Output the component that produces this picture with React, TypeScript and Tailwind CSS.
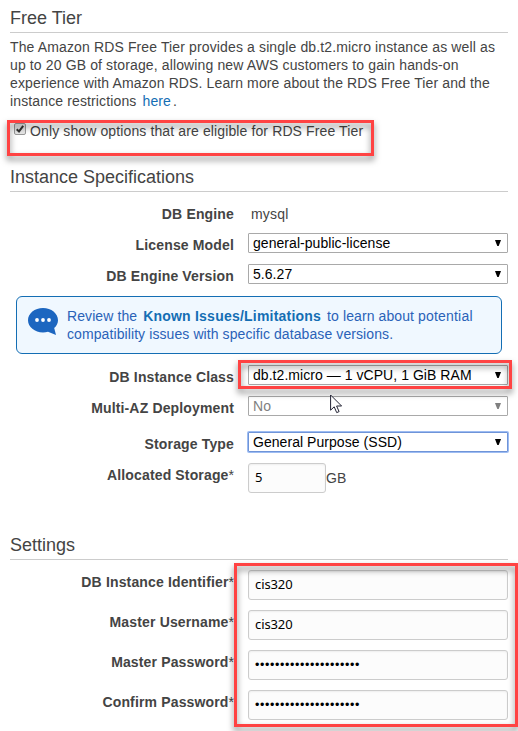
import type { ReactNode } from "react";

const sans = "font-['Liberation_Sans',Arial,sans-serif]";

function Heading({ children }: { children: ReactNode }) {
  return (
    <h2 className="h-[26px] border-b border-[#ccc] text-[18px] leading-[22px] text-[#444]">
      {children}
    </h2>
  );
}

function Row({ label, star, className, children }: { label: string; star?: boolean; className: string; children: ReactNode }) {
  return (
    <div className={`flex ${className}`}>
      <div className="w-[224px] shrink-0 pt-[3px] text-right text-[14px] leading-[18px] font-bold tracking-[0.15px] whitespace-nowrap text-[#444]">
        {label}
        {star && <span className="font-normal tracking-normal">*</span>}
      </div>
      <div className="ml-[14px] flex">{children}</div>
    </div>
  );
}

function Select({ value, className = "border-[#a9a9a9] text-black" }: { value: string; className?: string }) {
  return (
    <div className={`flex h-5 w-[260px] items-center justify-between rounded-[1px] border bg-white pr-[6px] pl-1 text-[14px] leading-[18px] tracking-[0.05px] ${className}`}>
      <span className="whitespace-nowrap">{value}</span>
      <svg width="6" height="6" viewBox="0 0 6 6" fill="currentColor">
        <path d="M0 0h6L3.700 6H2.300z" />
      </svg>
    </div>
  );
}

function Field({ value, width = "w-[260px]", password }: { value: string; width?: string; password?: boolean }) {
  return (
    <div className={`flex h-[30px] items-center rounded-[3px] border border-[#ccc] bg-[#fcfcfc] pl-[6px] text-black shadow-[inset_0_1px_2px_rgba(0,0,0,0.06)] ${width}`}>
      {password ? (
        <span className="text-[12.5px] leading-[18px] tracking-[0.62px]">{value}</span>
      ) : (
        <span className="pb-[2px] font-['Noto_Sans',sans-serif] text-[13px] leading-[18px] tracking-[-0.1px]">{value}</span>
      )}
    </div>
  );
}

function Highlight({ className }: { className: string }) {
  return <div className={`pointer-events-none absolute border-3 border-[#ff4343] drop-shadow-[0_4px_3px_rgba(0,0,0,0.5)] ${className}`} />;
}

export default function App() {
  return (
    <div className={`relative h-[731px] w-[518px] overflow-hidden bg-white pt-[7px] pl-[10px] text-[#444] ${sans}`}>
      <section className="w-[498px]">
        <Heading>Free Tier</Heading>
        <p className="mt-[5px] text-[14px] leading-[18px] tracking-[0.13px] whitespace-nowrap">
          The Amazon RDS Free Tier provides a single db.t2.micro instance as well as
          <br />
          up to 20 GB of storage, allowing new AWS customers to gain hands-on
          <br />
          experience with Amazon RDS. Learn more about the RDS Free Tier and the
          <br />
          instance restrictions <span className="mr-[2px] ml-[2px] text-[#146eb4]">here</span>.
        </p>
        <div className="mt-[11px] flex h-[22px] pl-1">
          <svg className="mt-[2px]" width="12" height="12" viewBox="0 0 12 12">
            <rect x=".5" y=".5" width="11" height="11" rx="1.5" fill="#e5e5e5" stroke="#999" />
            <path d="M2.700 6.200 5 8.400 9.200 2.800" fill="none" stroke="#333" strokeWidth="2" />
          </svg>
          <span className="ml-1 text-[14px] leading-[20px] tracking-[0.12px] whitespace-nowrap">
            Only show options that are eligible for RDS Free Tier
          </span>
        </div>
      </section>

      <section className="mt-[23px] w-[498px]">
        <Heading>Instance Specifications</Heading>
        <Row label="DB Engine" className="mt-[10px] h-[31px]">
          <span className="pt-[3px] pl-[3px] text-[14px] leading-[18px] tracking-[0.2px]">mysql</span>
        </Row>
        <Row label="License Model" className="h-[31px]">
          <Select value="general-public-license" />
        </Row>
        <Row label="DB Engine Version" className="h-8">
          <Select value="5.6.27" />
        </Row>
        <div className="ml-[6px] flex h-[58px] w-[486px] rounded-[6px] border border-[#146eb4] bg-[#f0f8ff]">
          <svg className="mt-[10px] ml-[11px] shrink-0" width="31" height="29" viewBox="0 0 31 29">
            <path fill="#1c66c0" d="M15 1C23.300 1 30 6.600 30 13.200c0 3-1.500 5.800-3.800 7.900l1.800 6.800-8-3.200c-1.600.5-3.300.7-5 .7C6.700 25.400 0 19.900 0 13.200S6.700 1 15 1z" />
            <g fill="#fff">
              <circle cx="9" cy="13" r="1.900" />
              <circle cx="15" cy="13" r="1.900" />
              <circle cx="21" cy="13" r="1.900" />
            </g>
          </svg>
          <p className="mt-[10px] ml-2 text-[14px] leading-[18px] tracking-[0.09px] whitespace-nowrap text-[#2a62b8]">
            Review the <b className="mx-[2px] tracking-[0.22px] text-[#146eb4]">Known Issues/Limitations</b> to learn about{" "}
            <span className="tracking-[0.2px]">potential</span>
            <br />
            compatibility issues with specific database versions.
          </p>
        </div>
        <Row label="DB Instance Class" className="mt-[11px] h-[31px]">
          <Select value="db.t2.micro — 1 vCPU, 1 GiB RAM" />
        </Row>
        <Row label="Multi-AZ Deployment" className="h-9">
          <Select value="No" className="border-[#a9a9a9] text-[#808080]" />
        </Row>
        <Row label="Storage Type" className="h-[31px]">
          <Select value="General Purpose (SSD)" className="border-[#6f94d8] text-black shadow-[0_0_0_1px_#9dbcf2]" />
        </Row>
        <Row label="Allocated Storage" star className="h-[30px]">
          <Field value="5" width="w-[78px]" />
          <span className="pt-[6px] text-[14px] leading-[18px]">GB</span>
        </Row>
      </section>

      <section className="mt-[41px] w-[498px]">
        <Heading>Settings</Heading>
        <div className="mt-[10px] flex flex-col gap-[10px]">
          <Row label="DB Instance Identifier" star className="h-[30px]">
            <Field value="cis320" />
          </Row>
          <Row label="Master Username" star className="h-[30px]">
            <Field value="cis320" />
          </Row>
          <Row label="Master Password" star className="h-[30px]">
            <Field value="•••••••••••••••••••••" password />
          </Row>
          <Row label="Confirm Password" star className="h-[30px]">
            <Field value="•••••••••••••••••••••" password />
          </Row>
        </div>
      </section>

      <Highlight className="top-[120px] left-[7px] h-9 w-[367px]" />
      <Highlight className="top-[360px] left-[238px] h-[29px] w-[274px]" />
      <Highlight className="top-[563px] left-[234px] h-[164px] w-[284px]" />
      <svg className="absolute top-[394px] left-[330px]" width="13" height="20" viewBox="0 0 13 20">
        <path d="M.6 1v15.200l3.600-3.400 2.500 5.800 2.400-1-2.500-5.600h5z" fill="#fff" stroke="#223" strokeWidth="1" />
      </svg>
    </div>
  );
}
